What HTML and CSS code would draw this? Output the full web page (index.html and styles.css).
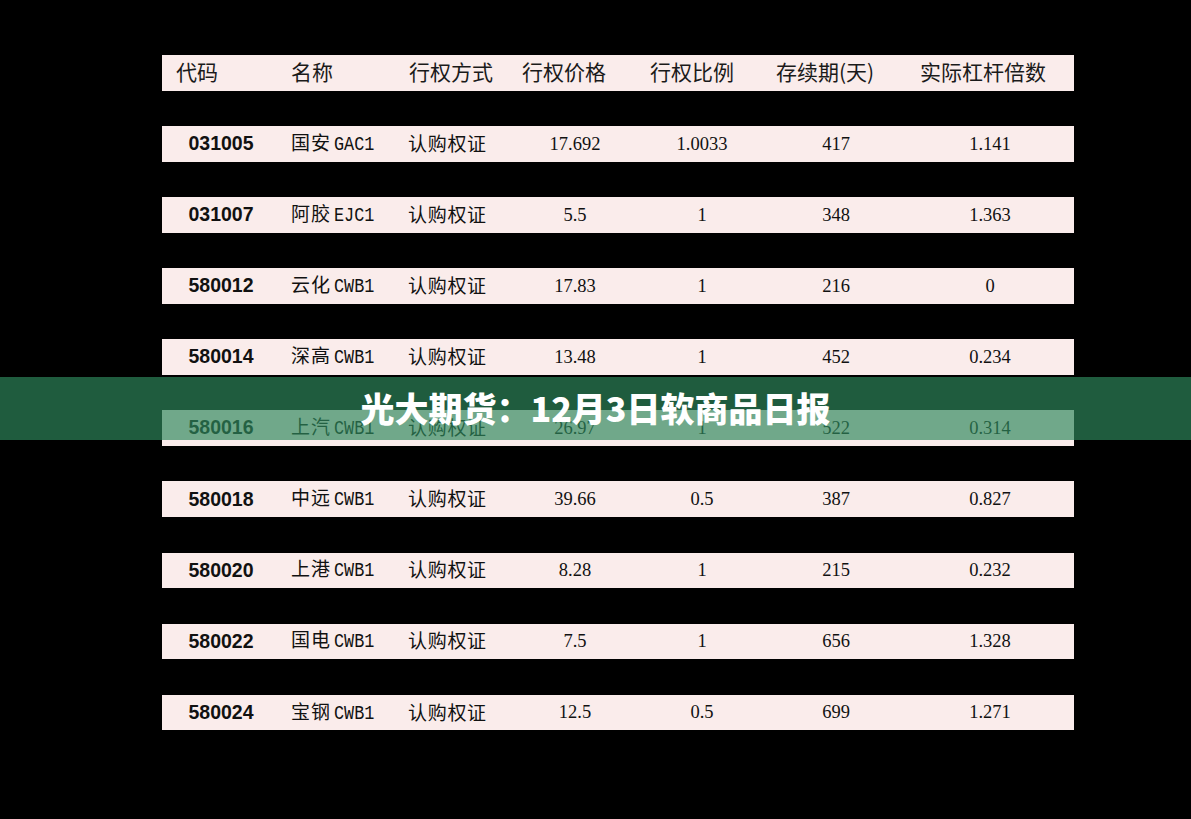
FILE: index.html
```html
<!DOCTYPE html>
<html lang="zh-CN">
<head>
<meta charset="utf-8">
<title>光大期货：12月3日软商品日报</title>
<link rel="stylesheet" href="styles.css">
</head>
<body>
<div class="page">
  <div class="table">
    <div class="row head">
      <div class="h c1">代码</div>
      <div class="h c2">名称</div>
      <div class="h c3">行权方式</div>
      <div class="h c4">行权价格</div>
      <div class="h c5">行权比例</div>
      <div class="h c6">存续期(天)</div>
      <div class="h c7">实际杠杆倍数</div>
    </div>
    <div class="row">
      <div class="code">031005</div>
      <div class="name">国安<span class="lat">GAC1</span></div>
      <div class="type">认购权证</div>
      <div class="num">17.692</div>
      <div class="num">1.0033</div>
      <div class="num">417</div>
      <div class="num last">1.141</div>
    </div>
    <div class="row">
      <div class="code">031007</div>
      <div class="name">阿胶<span class="lat">EJC1</span></div>
      <div class="type">认购权证</div>
      <div class="num">5.5</div>
      <div class="num">1</div>
      <div class="num">348</div>
      <div class="num last">1.363</div>
    </div>
    <div class="row">
      <div class="code">580012</div>
      <div class="name">云化<span class="lat">CWB1</span></div>
      <div class="type">认购权证</div>
      <div class="num">17.83</div>
      <div class="num">1</div>
      <div class="num">216</div>
      <div class="num last">0</div>
    </div>
    <div class="row">
      <div class="code">580014</div>
      <div class="name">深高<span class="lat">CWB1</span></div>
      <div class="type">认购权证</div>
      <div class="num">13.48</div>
      <div class="num">1</div>
      <div class="num">452</div>
      <div class="num last">0.234</div>
    </div>
    <div class="row">
      <div class="code">580016</div>
      <div class="name">上汽<span class="lat">CWB1</span></div>
      <div class="type">认购权证</div>
      <div class="num">26.97</div>
      <div class="num">1</div>
      <div class="num">522</div>
      <div class="num last">0.314</div>
    </div>
    <div class="row">
      <div class="code">580018</div>
      <div class="name">中远<span class="lat">CWB1</span></div>
      <div class="type">认购权证</div>
      <div class="num">39.66</div>
      <div class="num">0.5</div>
      <div class="num">387</div>
      <div class="num last">0.827</div>
    </div>
    <div class="row">
      <div class="code">580020</div>
      <div class="name">上港<span class="lat">CWB1</span></div>
      <div class="type">认购权证</div>
      <div class="num">8.28</div>
      <div class="num">1</div>
      <div class="num">215</div>
      <div class="num last">0.232</div>
    </div>
    <div class="row">
      <div class="code">580022</div>
      <div class="name">国电<span class="lat">CWB1</span></div>
      <div class="type">认购权证</div>
      <div class="num">7.5</div>
      <div class="num">1</div>
      <div class="num">656</div>
      <div class="num last">1.328</div>
    </div>
    <div class="row">
      <div class="code">580024</div>
      <div class="name">宝钢<span class="lat">CWB1</span></div>
      <div class="type">认购权证</div>
      <div class="num">12.5</div>
      <div class="num">0.5</div>
      <div class="num">699</div>
      <div class="num last">1.271</div>
    </div>
  </div>
  <div class="banner">
    <h1 class="title">光大期货：12月3日软商品日报</h1>
  </div>
</div>
</body>
</html>
```

FILE: styles.css
```css
html, body {
  margin: 0;
  padding: 0;
  background: #000;
}
.page {
  position: relative;
  width: 1191px;
  height: 819px;
  overflow: hidden;
  background: #000;
}
.table {
  padding-top: 55px;
  margin-left: 162px;
  width: 912px;
  display: flex;
  flex-direction: column;
  gap: 35.4px;
}
.row {
  height: 35.7px;
  background: #faeceb;
  display: grid;
  grid-template-columns: 118px 120px 115px 120px 134px 134px 171px;
  align-items: center;
  color: #111;
}
.h {
  font-family: "Noto Sans CJK SC", sans-serif;
  font-size: 21px;
  line-height: 1;
  color: #1a1a1a;
  padding-bottom: 2px;
}
.h.c1 { padding-left: 14px; }
.h.c2 { padding-left: 11px; }
.h.c3 { padding-left: 9px; }
.h.c4 { padding-left: 7px; }
.h.c5 { padding-left: 15px; }
.h.c6 { padding-left: 7px; }
.h.c7 { padding-left: 17px; }
.code {
  font-family: "Liberation Sans", Arial, sans-serif;
  font-weight: 700;
  font-size: 19.5px;
  text-align: center;
  line-height: 1;
}
.name {
  font-family: "Noto Sans CJK SC", sans-serif;
  font-size: 19px;
  letter-spacing: 1px;
  padding-left: 11px;
  line-height: 1;
  white-space: nowrap;
  padding-bottom: 1px;
}
.lat {
  display: inline-block;
  font-family: "Liberation Mono", "Courier New", monospace;
  font-size: 21px;
  letter-spacing: 0;
  margin-left: 3px;
  transform: scaleX(0.8);
  transform-origin: left center;
}
.type {
  font-family: "Noto Sans CJK SC", sans-serif;
  font-size: 19px;
  letter-spacing: 0.7px;
  padding-left: 8px;
  line-height: 1;
  padding-bottom: 3px;
}
.num {
  font-family: "Liberation Serif", "Times New Roman", serif;
  font-size: 18.5px;
  text-align: center;
  line-height: 1;
}
.num.last { padding-left: 3px; }
.banner {
  position: absolute;
  left: 0;
  top: 377px;
  width: 1191px;
  height: 63px;
  background: rgba(46, 135, 91, 0.68);
  display: flex;
  align-items: center;
  justify-content: center;
}
.title {
  margin: 0;
  font-family: "Noto Sans CJK SC", sans-serif;
  font-weight: 900;
  font-size: 34px;
  line-height: 1;
  color: #fff;
  padding-bottom: 2px;
}
```
